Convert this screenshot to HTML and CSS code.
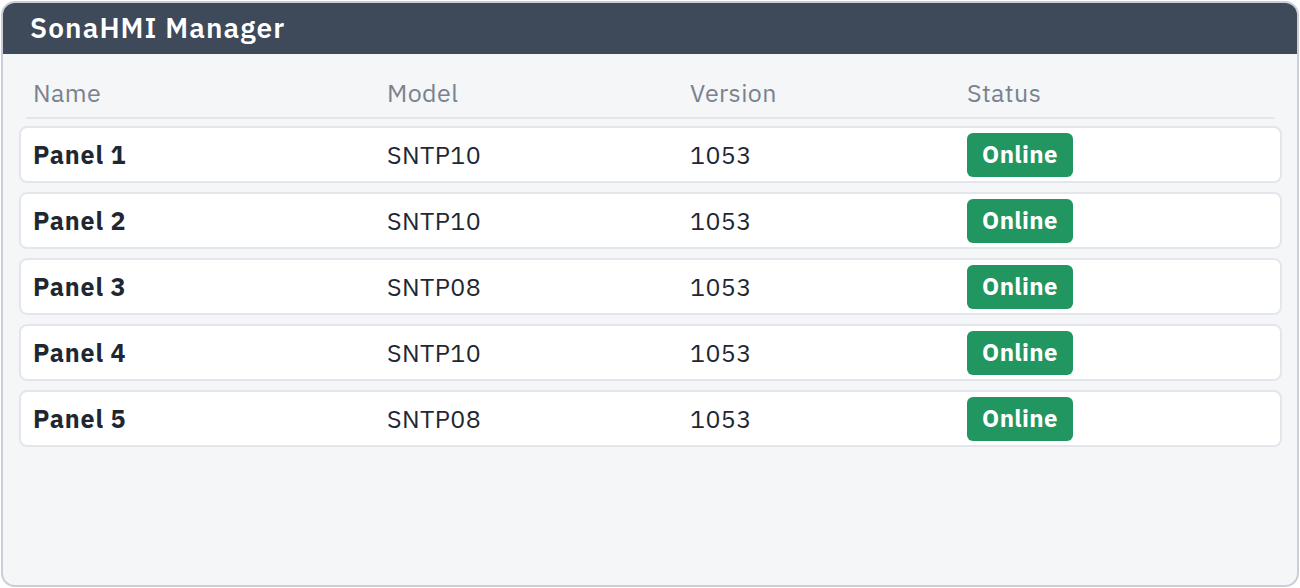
FILE: index.html
```html
<!DOCTYPE html>
<html lang="en">
<head>
  <meta charset="UTF-8" />
  <title>SonaHMI Manager</title>
  <link rel="stylesheet" href="styles.css">
</head>
<body>
  <div class="window">
    <div class="titlebar">SonaHMI Manager</div>
    <div class="content">
      <div class="row head">
        <div>Name</div>
        <div>Model</div>
        <div>Version</div>
        <div>Status</div>
      </div>
      <div class="row panel">
        <div class="name">Panel 1</div>
        <div>SNTP10</div>
        <div>1053</div>
        <div><span class="badge">Online</span></div>
      </div>
      <div class="row panel">
        <div class="name">Panel 2</div>
        <div>SNTP10</div>
        <div>1053</div>
        <div><span class="badge">Online</span></div>
      </div>
      <div class="row panel">
        <div class="name">Panel 3</div>
        <div>SNTP08</div>
        <div>1053</div>
        <div><span class="badge">Online</span></div>
      </div>
      <div class="row panel">
        <div class="name">Panel 4</div>
        <div>SNTP10</div>
        <div>1053</div>
        <div><span class="badge">Online</span></div>
      </div>
      <div class="row panel">
        <div class="name">Panel 5</div>
        <div>SNTP08</div>
        <div>1053</div>
        <div><span class="badge">Online</span></div>
      </div>
    </div>
  </div>
</body>
</html>
```

FILE: styles.css
```css
body {
  margin: 0;
  padding: 1px;
  font-family: "IBM Plex Sans", "Noto Sans", sans-serif;
  background: #ffffff;
  color: #1f2733;
}
.window {
  height: 586px;
  border: 2px solid #c9ced8;
  border-radius: 14px;
  background: #f4f6f8;
  overflow: hidden;
  box-sizing: border-box;
}
.titlebar {
  background: #3e4959;
  color: #ffffff;
  font-size: 28px;
  font-weight: 600;
  letter-spacing: 1.1px;
  height: 51px;
  line-height: 50px;
  padding-left: 27px;
}
.content {
  padding: 14px 15px 0 16px;
}
.row {
  display: grid;
  grid-template-columns: 354px 303px 277px 1fr;
  align-items: center;
  font-size: 25px;
  letter-spacing: 0.4px;
}
.head {
  margin: 0 7px 7px;
  padding: 0 7px;
  height: 49px;
  border-bottom: 2px solid #e3e7ea;
  color: #7a828e;
}
.panel {
  background: #ffffff;
  border: 2px solid #e3e7eb;
  border-radius: 8px;
  height: 57px;
  box-sizing: border-box;
  padding-left: 12px;
  margin-bottom: 9px;
}
.name {
  font-weight: 700;
  letter-spacing: 0.8px;
}
.badge {
  display: inline-block;
  background: #219660;
  color: #ffffff;
  font-weight: 700;
  font-size: 24px;
  border-radius: 6px;
  width: 106px;
  height: 44px;
  line-height: 43px;
  text-align: center;
  box-sizing: border-box;
}
```
